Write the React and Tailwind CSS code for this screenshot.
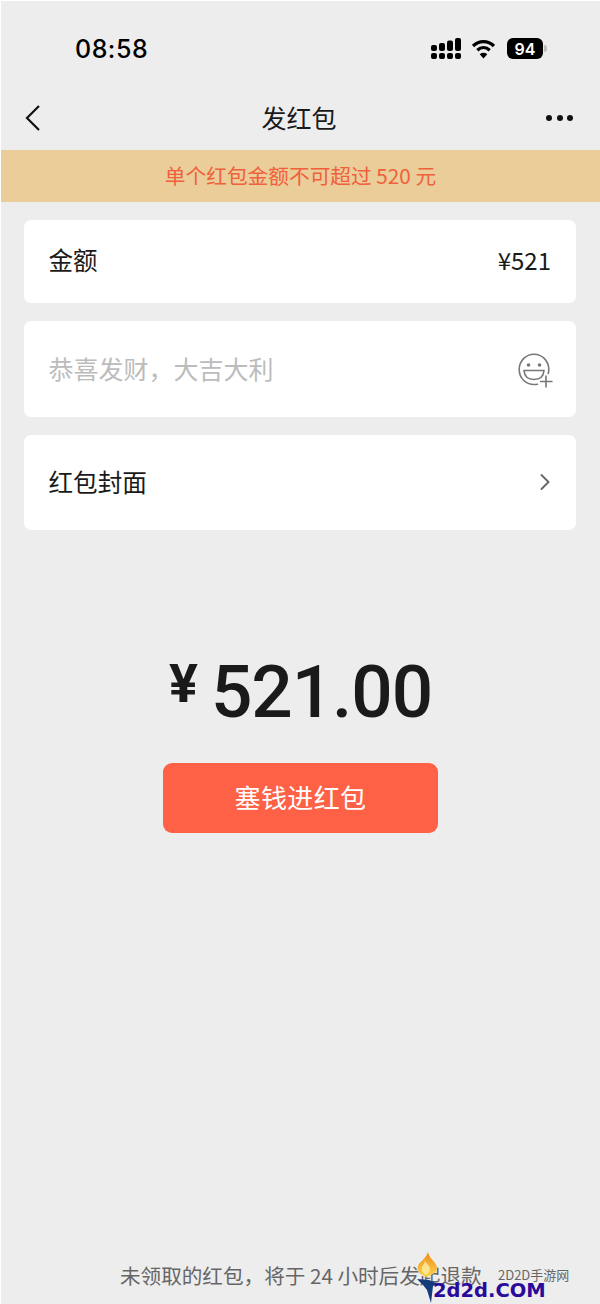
import { ChevronRight } from 'lucide-react';

const CJK = '"Noto Sans CJK SC", "Noto Sans", sans-serif';

const SignalIcon = () => (
  <svg width="30" height="21" viewBox="0 0 30 21" fill="#000">
    <rect x="0" y="15" width="6" height="6" rx="2" />
    <rect x="8" y="15" width="6" height="6" rx="2" />
    <rect x="16" y="15" width="6" height="6" rx="2" />
    <rect x="24" y="15" width="6" height="6" rx="2" />
    <rect x="0" y="7" width="6" height="6" rx="2" />
    <rect x="8" y="5" width="6" height="8" rx="2" />
    <rect x="16" y="2.5" width="6" height="10.5" rx="2" />
    <rect x="24" y="0" width="6" height="13" rx="2" />
  </svg>
);

const WifiIcon = () => (
  <svg width="25" height="20" viewBox="0 0 24 20" fill="none" stroke="#000" strokeWidth="3.2">
    <path d="M1.5 7 C7.5 1.2 16.5 1.2 22.5 7" />
    <path d="M5.8 11.2 C9.5 7.8 14.5 7.8 18.2 11.2" />
    <path d="M12 19.5 L8.2 15.2 C10.5 13.4 13.5 13.4 15.8 15.2 Z" fill="#000" stroke="none" />
  </svg>
);

const SmileAddIcon = () => (
  <svg width="36" height="36" viewBox="0 0 36 36" fill="none" stroke="#777" strokeWidth="1.6" strokeLinecap="round">
    <path d="M19.5 31.2 C18 31.5 17 31.5 16 31.5 C7.8 31.5 1.2 25.2 1.2 16.5 C1.2 8 7.8 1.2 16 1.2 C24.2 1.2 30.8 8 30.8 16.5 C30.8 18 30.6 19.2 30.2 20.5" />
    <circle cx="10.5" cy="12" r="1.8" fill="#777" stroke="none" />
    <circle cx="21.5" cy="12" r="1.8" fill="#777" stroke="none" />
    <path d="M6 17.5 H26 C25.5 23.5 21.5 26.5 16 26.5 C10.5 26.5 6.5 23.5 6 17.5 Z" />
    <path d="M28 22.5 V34.5 M22 28.5 H34.5" strokeLinecap="butt" />
  </svg>
);

const TorchIcon = () => (
  <svg width="24" height="52" viewBox="0 0 24 52">
    <defs>
      <linearGradient id="flame" x1="0" y1="0" x2="0" y2="1">
        <stop offset="0" stopColor="#ef8a17" />
        <stop offset="1" stopColor="#fcd34d" />
      </linearGradient>
    </defs>
    <path d="M12 0 C13 7 22 11 21 17 C20 21 15 23 11 25 C5 23 0 20 2 14 C3 10 10 7 12 0 Z" fill="url(#flame)" />
    <path d="M9 8 C10 12 15 14 14 18 C13 21 11 22 10 23 C7 21 5 19 6 15 C7 13 9 11 9 8 Z" fill="#fff3b0" opacity="0.7" />
    <path d="M1 27 L13 28 L22 32 L17 34 L15 51 L11 38 L7 33 Z" fill="#143c7c" />
  </svg>
);

const App = () => {
  return (
    <div
      className="relative flex h-[1304px] w-[600px] flex-col overflow-hidden border-l border-t border-white bg-[#ededed] text-[#1a1a1a]"
      style={{ fontFamily: CJK }}
    >
      {/* status bar */}
      <div className="flex h-[85px] shrink-0 items-start justify-between pl-[74px] pr-[53px] pt-[30px]">
        <span className="text-[25px] leading-[36px] font-medium tracking-[0.5px] text-black" style={{ fontFamily: 'Inter, sans-serif' }}>
          08:58
        </span>
        <div className="flex items-center pt-[7px]">
          <SignalIcon />
          <div className="ml-[10px]"><WifiIcon /></div>
          <div className="ml-[11px] flex h-[21px] w-[36px] items-center justify-center rounded-[6px] bg-black text-[16px] font-semibold text-white" style={{ fontFamily: 'Inter, sans-serif' }}>
            94
          </div>
          <div className="ml-[1px] h-[7px] w-[3px] rounded-r-full bg-[#bdbdbd]" />
        </div>
      </div>

      {/* nav */}
      <div className="grid h-[64px] shrink-0 grid-cols-3 items-center pl-[24px] pr-[27px]">
        <svg width="16" height="28" viewBox="0 0 16 28" fill="none" stroke="#111" strokeWidth="2.2">
          <path d="M14 2 L2 14 L14 26" />
        </svg>
        <span className="justify-self-center pb-[3px] text-[25px] leading-[36px] font-normal">发红包</span>
        <div className="flex gap-[4.5px] justify-self-end">
          <span className="size-[6px] rounded-full bg-[#111]" />
          <span className="size-[6px] rounded-full bg-[#111]" />
          <span className="size-[6px] rounded-full bg-[#111]" />
        </div>
      </div>

      {/* warning */}
      <div className="flex h-[52px] shrink-0 items-center justify-center bg-[#eacd98] text-[20.7px] text-[#f0603c]">
        单个红包金额不可超过 520 元
      </div>

      {/* form */}
      <div className="mt-[18px] flex flex-col gap-[18px] pl-[23px] pr-[24px]">
        <div className="flex h-[83px] items-center justify-between rounded-[7px] bg-white pb-[3px] pl-[24.5px] pr-[25px] text-[24.5px]">
          <span>金额</span>
          <span className="text-[24px]">¥521</span>
        </div>
        <div className="flex h-[96px] items-center justify-between rounded-[7px] bg-white pl-[24.5px] pr-[22px] text-[25px]">
          <span className="pb-[1px] text-[#bcbcbc]">恭喜发财，大吉大利</span>
          <span className="pt-[3px]"><SmileAddIcon /></span>
        </div>
        <div className="flex h-[95px] items-center justify-between rounded-[7px] bg-white pb-[2px] pl-[24.5px] pr-[17px] text-[24.6px]">
          <span>红包封面</span>
          <ChevronRight size={28} strokeWidth={1.6} color="#666" />
        </div>
      </div>

      {/* total */}
      <div className="mt-[122px] flex items-start justify-center" style={{ fontFamily: 'Roboto, sans-serif' }}>
        <span className="mr-[13px] mt-[2px] text-[54px] leading-[60px] font-bold">¥</span>
        <span className="text-[73px] leading-[80px] font-medium tracking-[-1.1px]">521.00</span>
      </div>

      <div className="mt-[31px] flex h-[70px] w-[275px] items-center justify-center self-center rounded-[9px] bg-[#ff6146] pb-[3px] text-[26px] font-normal tracking-[0.4px] text-white">
        塞钱进红包
      </div>

      {/* footer note */}
      <div className="mt-auto flex h-[43px] items-start pl-[119px] text-[20.6px] leading-[28px] text-[#666]">
        未领取的红包，将于 24 小时后发起退款
      </div>

      {/* site watermark */}
      <div className="absolute left-[415px] top-[1251px]"><TorchIcon /></div>
      <div className="absolute left-[432px] top-[1278px] text-[19.5px] leading-[24px] font-bold text-[#2a0a9a]" style={{ fontFamily: '"DejaVu Sans", sans-serif' }}>
        2d2d.COM
      </div>
      <div className="absolute left-[497px] top-[1266px] text-[13px] leading-[16px] text-[#666]">2D2D手游网</div>
    </div>
  );
};

export default App;
